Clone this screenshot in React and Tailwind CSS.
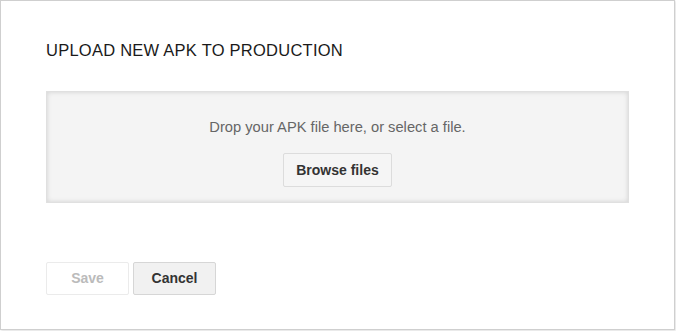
export default function App() {
  return (
    <div className="w-[676px] h-[331px] bg-white" style={{ fontFamily: '"Liberation Sans", Arial, sans-serif' }}>
      <div className="w-[675px] h-[330px] border border-[#cfcfcf] shadow-[1px_1px_2px_rgba(0,0,0,0.12)] bg-white px-[45px] pt-[38px]">
        <h1 className="text-[16.5px] leading-[22px] text-[#1a1a1a] tracking-[0.25px]">UPLOAD NEW APK TO PRODUCTION</h1>
        <div className="mt-[30px] h-[112px] bg-[#f4f4f4] border border-[#e0e0e0] shadow-[inset_0_0_5px_rgba(0,0,0,0.14)] flex flex-col items-center pt-[25px]">
          <p className="text-[14.7px] leading-[20px] text-[#666]">Drop your APK file here, or select a file.</p>
          <button className="mt-[16px] h-[34px] px-[12px] bg-[#f5f5f5] border border-[#dcdcdc] rounded-[2px] text-[14px] font-bold text-[#333]">
            Browse files
          </button>
        </div>
        <div className="mt-[59px] flex gap-[4px]">
          <button className="w-[83px] h-[33px] bg-white border border-[#ebebeb] rounded-[2px] text-[14px] font-bold text-[#bbb]">
            Save
          </button>
          <button className="w-[83px] h-[33px] bg-[#f1f1f1] border border-[#d6d6d6] rounded-[2px] text-[14px] font-bold text-[#333]">
            Cancel
          </button>
        </div>
      </div>
    </div>
  )
}
